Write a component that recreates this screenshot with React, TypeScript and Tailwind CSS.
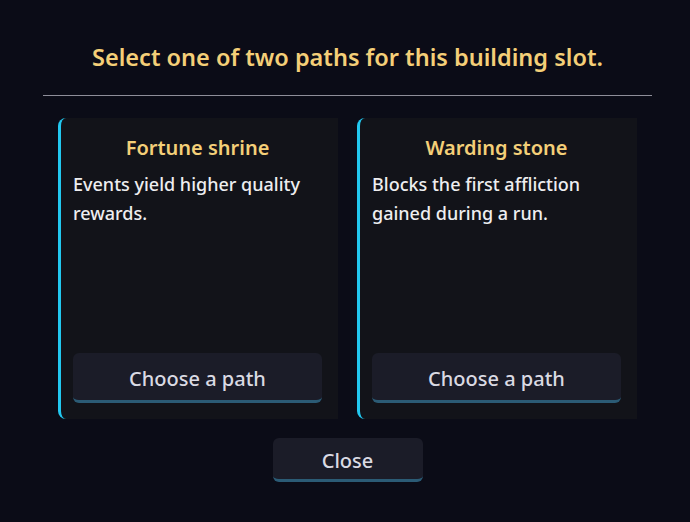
const paths = [
  { name: 'Fortune shrine', text: 'Events yield higher quality rewards.' },
  { name: 'Warding stone', text: 'Blocks the first affliction gained during a run.' },
]

function PathCard({ name, text }: { name: string; text: string }) {
  return (
    <div className="flex h-[301px] w-[280px] flex-col rounded-l-lg border-l-[3px] border-[#22c8f0] bg-[#121319] pt-4 pb-4 pl-3 pr-4">
      <h2 className="text-center text-[20px] leading-7 font-semibold text-[#f4cf78]">{name}</h2>
      <p className="mt-2 text-[18px] leading-[29px] font-medium text-[#eeeef0]">{text}</p>
      <button className="mt-auto h-[50px] w-full rounded-md border-b-[3px] border-[#2b5b75] bg-[#1b1c28] pt-1 text-[20px] font-medium text-[#dadae3]">
        Choose a path
      </button>
    </div>
  )
}

export default function App() {
  return (
    <div
      className="flex h-[522px] w-[690px] flex-col bg-[#0b0c17] pr-[38px] pl-[43px]"
      style={{ fontFamily: '"Noto Sans", "Open Sans", sans-serif' }}
    >
      <h1 className="mt-[42px] text-center text-[23.5px] leading-[30px] font-semibold text-[#f4cf78]">
        Select one of two paths for this building slot.
      </h1>
      <div className="mt-[23px] h-px bg-[#8e8e99]" />
      <div className="mt-[22px] flex justify-center gap-[19px]">
        {paths.map((p) => (
          <PathCard key={p.name} name={p.name} text={p.text} />
        ))}
      </div>
      <div className="mt-[19px] flex justify-center">
        <button className="h-[44px] w-[150px] rounded-md border-b-[3px] border-[#2b5b75] bg-[#1b1c28] pt-1 text-[20px] font-medium text-[#dadae3]">
          Close
        </button>
      </div>
    </div>
  )
}
